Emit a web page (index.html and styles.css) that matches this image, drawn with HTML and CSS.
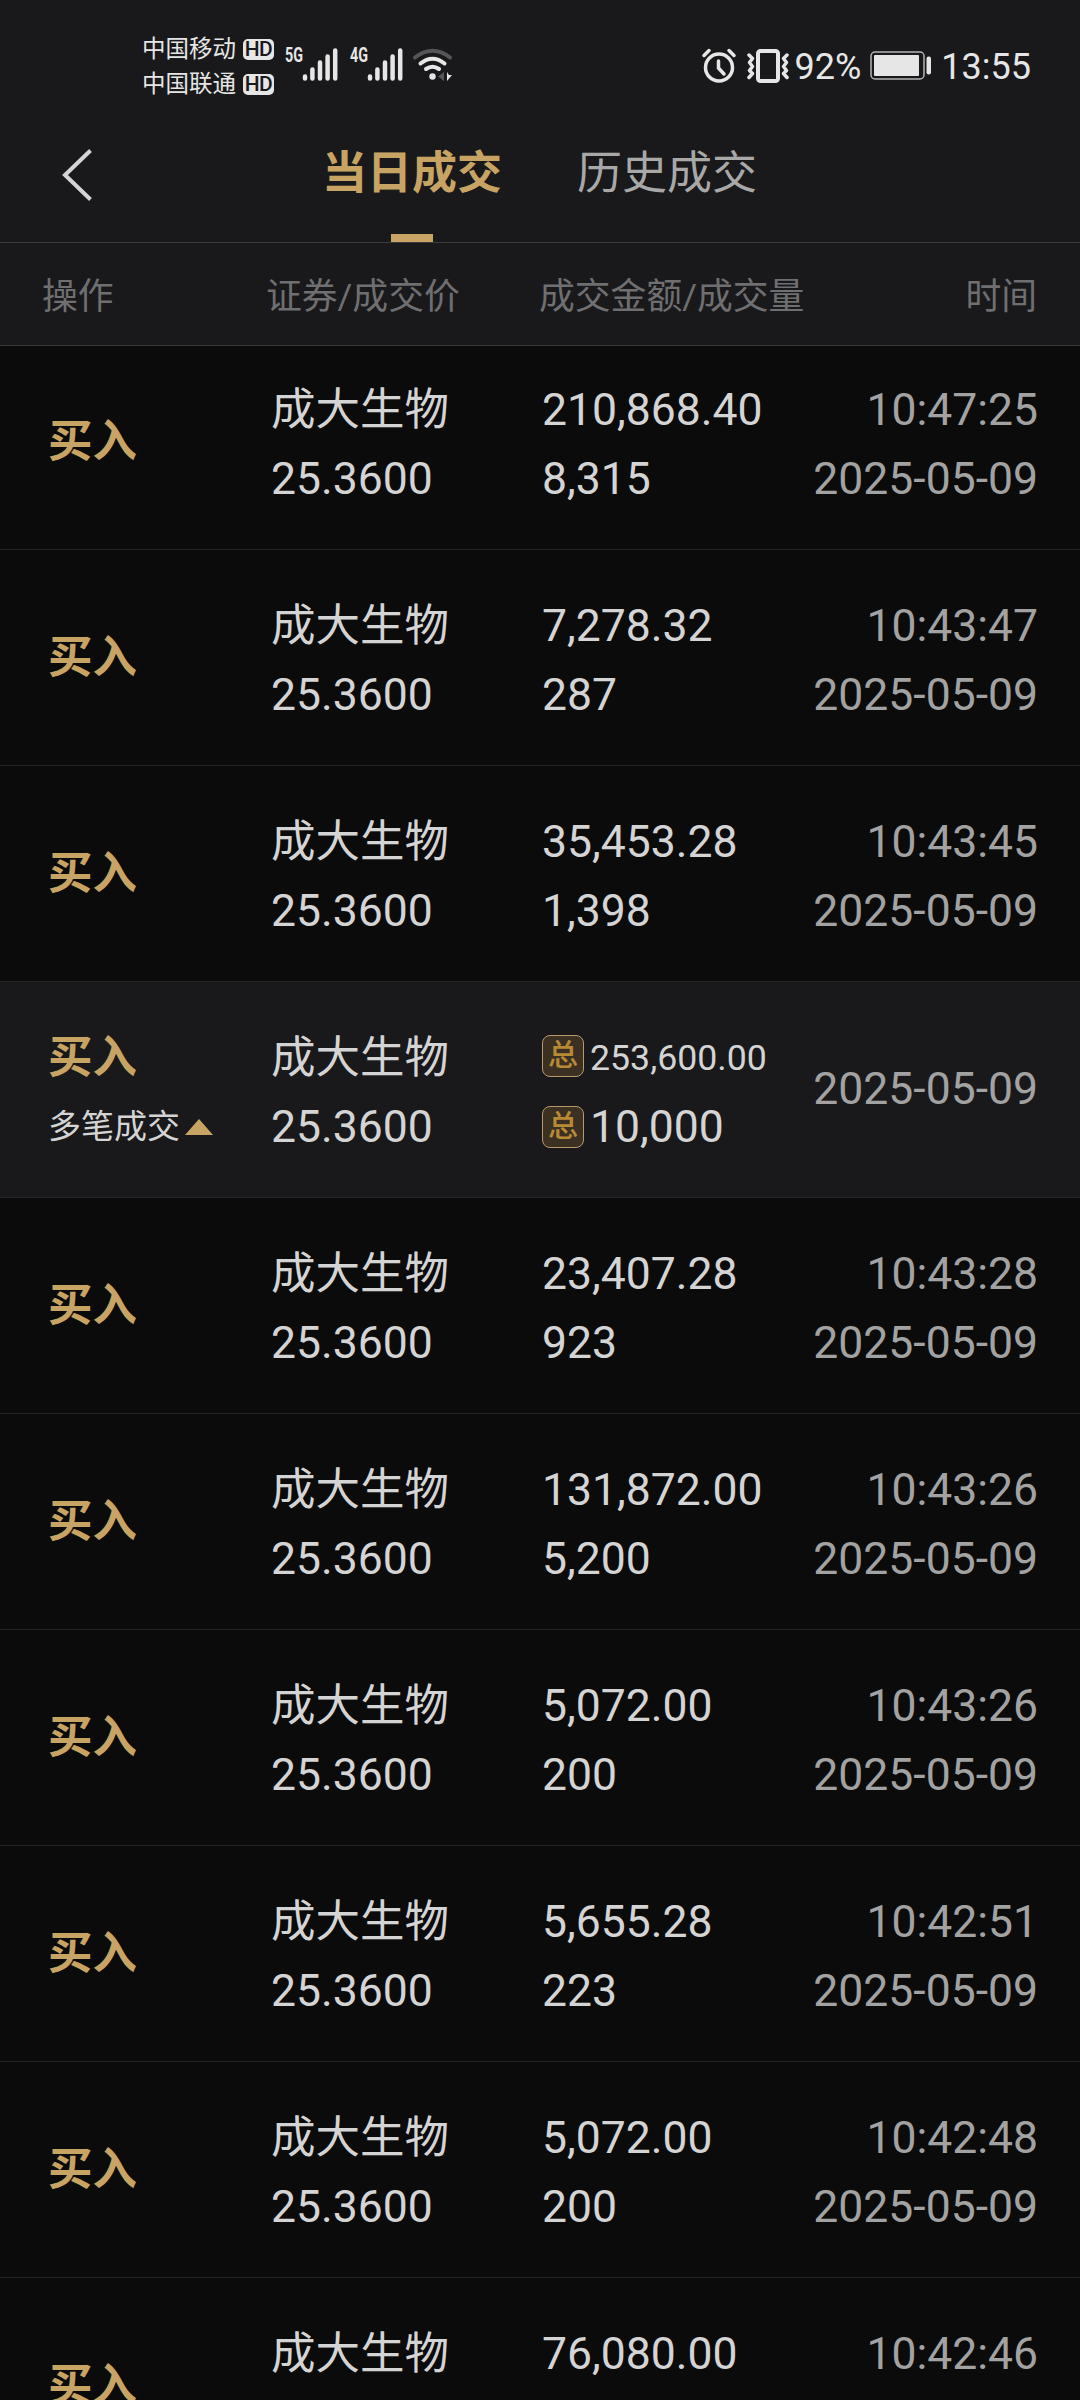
FILE: index.html
```html
<!DOCTYPE html>
<html lang="zh-CN">

<head>
    <meta charset="UTF-8">
    <meta name="viewport" content="width=device-width, initial-scale=1.0">
    <title>当日成交</title>
    <link rel="stylesheet" href="styles.css">
</head>

<body>
    <div class="status-bar">
        <div class="carriers">
            <div class="carrier">中国移动<span class="hd">HD</span></div>
            <div class="carrier">中国联通<span class="hd">HD</span></div>
        </div>
        <svg class="signal" width="54" height="36" viewBox="0 0 54 36">
            <text x="0" y="15" textLength="18" lengthAdjust="spacingAndGlyphs">5G</text>
            <path d="M20 31.500v-2M27.400 31.500v-9M35 31.500v-16M42.600 31.500v-22M50.200 31.500v-28" />
        </svg>
        <svg class="signal" width="54" height="36" viewBox="0 0 54 36">
            <text x="0" y="15" textLength="18" lengthAdjust="spacingAndGlyphs">4G</text>
            <path d="M20 31.500v-2M27.400 31.500v-9M35 31.500v-16M42.600 31.500v-22M50.200 31.500v-28" />
        </svg>
        <svg class="wifi" width="40" height="36" viewBox="0 0 40 36">
            <path class="dim" d="M2 10.500Q19.500 -3 37 10.500" />
            <path d="M7.500 16.500Q19.500 7 31.500 16.500" />
            <path d="M13 22Q19.500 17.500 26 22" />
            <circle cx="19.500" cy="29.500" r="3.200" />
            <path class="down" d="M31 25v9l-6-4.500z" />
            <path class="up" d="M34 25v9l5-6h-3z" />
        </svg>
        <div class="status-right">
            <svg class="alarm" width="34" height="36" viewBox="0 0 34 36">
                <circle cx="17" cy="19.500" r="13.500" />
                <path d="M16.500 13v7l5.500 6M2 7.500l5-5M32 7.500l-5-5" />
            </svg>
            <svg class="vibrate" width="44" height="36" viewBox="0 0 44 36">
                <rect x="12" y="3" width="20" height="30" rx="2.500" />
                <path d="M3 7l3.500 3.500L3.500 14.500l3 4-3 4 3 3L3 29.500M41 7l-3.500 3.500 3 4-3 4 3 4-3 3 3.500 4" />
            </svg>
            <span class="percent">92%</span>
            <svg class="battery" width="62" height="32" viewBox="0 0 62 32">
                <rect class="case" x="1" y="2" width="53" height="27" rx="4" />
                <rect x="4" y="5" width="45" height="21" rx="1" />
                <rect x="56.500" y="6.500" width="4.500" height="18" rx="2" />
            </svg>
            <span class="clock">13:55</span>
        </div>
    </div>

    <div class="nav">
        <svg class="back" width="32" height="56" viewBox="0 0 32 56">
            <path d="M29.500 3.500L4 28l25.500 24.500" />
        </svg>
        <div class="tab active">当日成交</div>
        <div class="tab">历史成交</div>
    </div>

    <div class="table-head">
        <div class="col-op">操作</div>
        <div class="col-stock">证券/成交价</div>
        <div class="col-amount">成交金额/成交量</div>
        <div class="col-time">时间</div>
    </div>

    <div class="list">
        <div class="row">
            <div class="op">买入</div>
            <div class="stock">成大生物<br>25.3600</div>
            <div class="amount">210,868.40<br>8,315</div>
            <div class="time">10:47:25<br>2025-05-09</div>
        </div>
        <div class="row">
            <div class="op">买入</div>
            <div class="stock">成大生物<br>25.3600</div>
            <div class="amount">7,278.32<br>287</div>
            <div class="time">10:43:47<br>2025-05-09</div>
        </div>
        <div class="row">
            <div class="op">买入</div>
            <div class="stock">成大生物<br>25.3600</div>
            <div class="amount">35,453.28<br>1,398</div>
            <div class="time">10:43:45<br>2025-05-09</div>
        </div>
        <div class="row total">
            <div class="op">买入
                <div class="multi">多笔成交<span class="arrow"></span></div>
            </div>
            <div class="stock">成大生物<br>25.3600</div>
            <div class="amount">
                <div class="sum small"><span class="badge">总</span>253,600.00</div>
                <div class="sum"><span class="badge">总</span>10,000</div>
            </div>
            <div class="time">2025-05-09</div>
        </div>
        <div class="row">
            <div class="op">买入</div>
            <div class="stock">成大生物<br>25.3600</div>
            <div class="amount">23,407.28<br>923</div>
            <div class="time">10:43:28<br>2025-05-09</div>
        </div>
        <div class="row">
            <div class="op">买入</div>
            <div class="stock">成大生物<br>25.3600</div>
            <div class="amount">131,872.00<br>5,200</div>
            <div class="time">10:43:26<br>2025-05-09</div>
        </div>
        <div class="row">
            <div class="op">买入</div>
            <div class="stock">成大生物<br>25.3600</div>
            <div class="amount">5,072.00<br>200</div>
            <div class="time">10:43:26<br>2025-05-09</div>
        </div>
        <div class="row">
            <div class="op">买入</div>
            <div class="stock">成大生物<br>25.3600</div>
            <div class="amount">5,655.28<br>223</div>
            <div class="time">10:42:51<br>2025-05-09</div>
        </div>
        <div class="row">
            <div class="op">买入</div>
            <div class="stock">成大生物<br>25.3600</div>
            <div class="amount">5,072.00<br>200</div>
            <div class="time">10:42:48<br>2025-05-09</div>
        </div>
        <div class="row">
            <div class="op">买入</div>
            <div class="stock">成大生物</div>
            <div class="amount">76,080.00</div>
            <div class="time">10:42:46</div>
        </div>
    </div>
</body>

</html>
```
FILE: styles.css
```css
* {
    box-sizing: border-box;
}

body {
    display: flex;
    flex-direction: column;
    width: 1080px;
    height: 2400px;
    margin: 0;
    overflow: hidden;
    background: #0b0b0b;
    color: #d4d4d4;
    font-family: Roboto, "Noto Sans CJK SC", sans-serif;
    font-size: 44.500px;
}

/* status bar */
.status-bar {
    display: flex;
    align-items: flex-start;
    flex-shrink: 0;
    height: 126px;
    padding: 32px 49px 0 142px;
    background: #19191b;
    color: #e6e6e6;
}

.status-bar svg {
    flex-shrink: 0;
    overflow: visible;
    fill: none;
    stroke: #e6e6e6;
    stroke-linecap: round;
}

.carrier {
    display: flex;
    align-items: center;
    height: 35px;
    font-size: 23.500px;
    line-height: 35px;
}

.hd {
    width: 31px;
    height: 21px;
    margin-left: 7px;
    border-radius: 5px;
    background: #e6e6e6;
    color: #19191b;
    font-size: 21px;
    font-weight: 500;
    letter-spacing: -0.500px;
    line-height: 21px;
    text-align: center;
}

.signal {
    margin: 15px 0 0 11px;
}

.signal path {
    stroke-width: 4.500;
}

.status-bar .signal text {
    fill: #e6e6e6;
    stroke: none;
    font-size: 20px;
    font-weight: 700;
}

.wifi {
    margin: 15px 0 0 9px;
}

.wifi path {
    stroke-width: 4;
}

.status-bar .wifi .dim {
    stroke: #555556;
}

.wifi circle,
.wifi .up {
    fill: #e6e6e6;
    stroke: none;
}

.wifi .down {
    fill: #555556;
    stroke: none;
}

.status-right {
    display: flex;
    align-items: flex-start;
    height: 70px;
    margin-left: auto;
    font-size: 36px;
    line-height: 70px;
}

.alarm {
    margin-top: 16px;
    stroke-width: 3.500;
}

.vibrate {
    margin: 16px 5px 0 10px;
    stroke-width: 4;
    stroke-linejoin: round;
}

.vibrate path {
    stroke-width: 3.500;
}

.battery {
    margin: 18px 9px 0 9px;
}

.status-bar .battery rect {
    fill: #e6e6e6;
    stroke: none;
}

.status-bar .battery .case {
    fill: none;
    stroke: #b4b4b4;
    stroke-width: 1.500;
}

/* title tabs */
.nav {
    display: flex;
    flex-shrink: 0;
    height: 117px;
    padding-left: 61px;
    border-bottom: 1px solid #3a3a3c;
    background: #19191b;
    font-size: 45px;
}

.back {
    margin: 21px 229px 0 0;
    fill: none;
    stroke: #d4d4d4;
    stroke-width: 4;
}

.tab {
    display: flex;
    flex-direction: column;
    justify-content: space-between;
    align-items: center;
    margin-right: 75px;
    color: #a8a8a8;
    line-height: 95px;
}

.tab.active {
    color: #c8a464;
    font-weight: 700;
}

.tab.active::after {
    content: "";
    width: 42px;
    height: 8px;
    background: #c8a464;
}

/* column titles */
.table-head {
    display: flex;
    flex-shrink: 0;
    height: 103px;
    padding: 3px 43px 0 42px;
    border-bottom: 1px solid #3a3a3c;
    background: #19191b;
    color: #6f6f71;
    font-size: 35.800px;
    line-height: 103px;
}

.col-op {
    width: 224px;
}

.col-stock {
    width: 273px;
}

.col-time {
    margin-left: auto;
}

/* the list is scrolled a little under the column titles */
.list {
    flex: 1;
    min-height: 0;
    margin-top: -12px;
    overflow: hidden;
    clip-path: inset(12px 0 0 0);
}

.row {
    display: flex;
    height: 216px;
    padding: 42px 42px 0 48px;
    border-bottom: 1px solid #252527;
    line-height: 69px;
}

.op {
    width: 223px;
    padding-top: 32px;
    color: #c8a464;
    font-weight: 700;
}

.stock {
    width: 271px;
}

.time {
    margin-left: auto;
    color: #a2a2a2;
    text-align: right;
}

.total {
    background: #19191b;
}

.total .op {
    padding-top: 0;
}

.total .time {
    padding-top: 31px;
}

.multi {
    display: flex;
    align-items: center;
    margin-top: -1px;
    color: #d4d4d4;
    font-size: 33px;
    font-weight: 400;
}

.arrow {
    margin: 1px 0 0 5px;
    border: 14px solid transparent;
    border-top-width: 0;
    border-bottom: 16px solid #c8a464;
}

.sum {
    display: flex;
    align-items: center;
}

.small {
    font-size: 35.700px;
}

.badge {
    width: 42px;
    height: 42px;
    margin: 0 6px 2px 0;
    border: 1px solid #b89a6a;
    border-radius: 8px;
    background: #3b3022;
    color: #b88a35;
    font-size: 30px;
    font-weight: 500;
    line-height: 38px;
    text-align: center;
}

.small .badge {
    margin-bottom: 6px;
}
```
